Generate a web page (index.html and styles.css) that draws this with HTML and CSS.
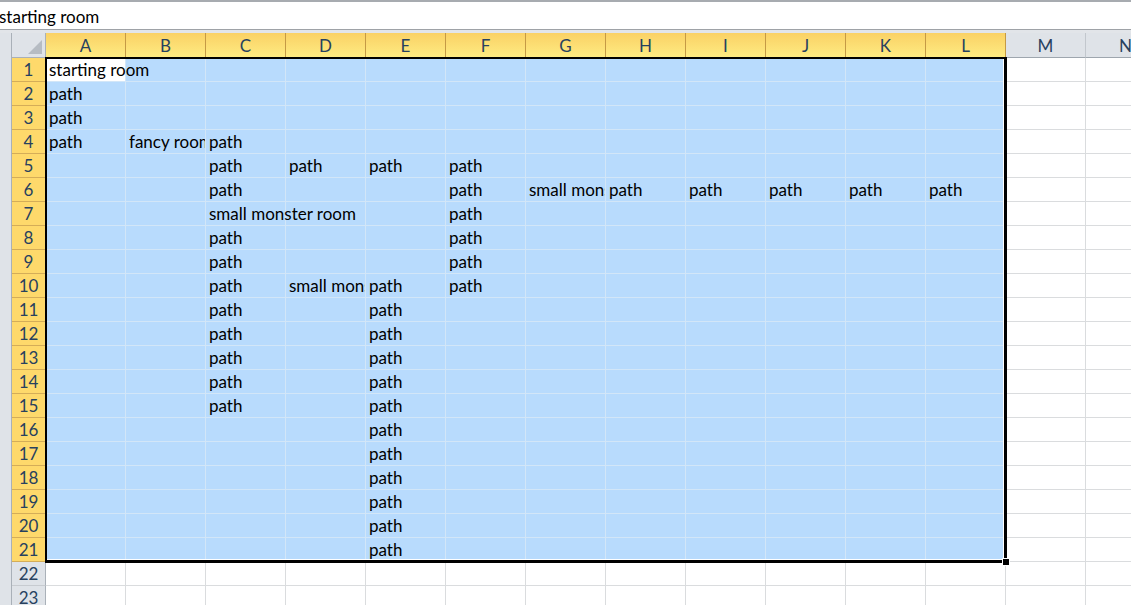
FILE: index.html
```html
<!DOCTYPE html>
<html>
<head>
<meta charset="utf-8">
<link rel="stylesheet" href="styles.css">
</head>
<body>
<div class="fx"><span class="fx-text">starting room</span></div>
<div class="sheet">
  <div class="gutter"></div>
  <div class="grid">
    <div class="corner"><span class="tri"></span></div>
    <div class="ch s">A</div><div class="ch s">B</div><div class="ch s">C</div><div class="ch s">D</div>
    <div class="ch s">E</div><div class="ch s">F</div><div class="ch s">G</div><div class="ch s">H</div>
    <div class="ch s">I</div><div class="ch s">J</div><div class="ch s">K</div><div class="ch s">L</div>
    <div class="ch">M</div><div class="ch">N</div>

    <div class="rh s">1</div><div class="rh s">2</div><div class="rh s">3</div><div class="rh s">4</div>
    <div class="rh s">5</div><div class="rh s">6</div><div class="rh s">7</div><div class="rh s">8</div>
    <div class="rh s">9</div><div class="rh s">10</div><div class="rh s">11</div><div class="rh s">12</div>
    <div class="rh s">13</div><div class="rh s">14</div><div class="rh s">15</div><div class="rh s">16</div>
    <div class="rh s">17</div><div class="rh s">18</div><div class="rh s">19</div><div class="rh s">20</div>
    <div class="rh s">21</div><div class="rh">22</div><div class="rh">23</div>

    <div class="body"></div>
    <div class="selection">
      <div class="sel-border"></div>
      <div class="handle"></div>
    </div>
    <div class="active"></div>

    <div class="t ca r1">starting room</div>
    <div class="t ca r2">path</div>
    <div class="t ca r3">path</div>
    <div class="t ca r4">path</div>
    <div class="t cb r4 clip">fancy room</div>
    <div class="t cc r4">path</div>

    <div class="t cc r5">path</div>
    <div class="t cd r5">path</div>
    <div class="t ce r5">path</div>
    <div class="t cf r5">path</div>

    <div class="t cc r6">path</div>
    <div class="t cf r6">path</div>
    <div class="t cg r6 clip">small monster room</div>
    <div class="t ch2 r6">path</div>
    <div class="t ci r6">path</div>
    <div class="t cj r6">path</div>
    <div class="t ck r6">path</div>
    <div class="t cl r6">path</div>

    <div class="t cc r7">small monster room</div>
    <div class="t cf r7">path</div>
    <div class="t cc r8">path</div>
    <div class="t cf r8">path</div>
    <div class="t cc r9">path</div>
    <div class="t cf r9">path</div>

    <div class="t cc r10">path</div>
    <div class="t cd r10 clip">small monster room</div>
    <div class="t ce r10">path</div>
    <div class="t cf r10">path</div>

    <div class="t cc r11">path</div><div class="t ce r11">path</div>
    <div class="t cc r12">path</div><div class="t ce r12">path</div>
    <div class="t cc r13">path</div><div class="t ce r13">path</div>
    <div class="t cc r14">path</div><div class="t ce r14">path</div>
    <div class="t cc r15">path</div><div class="t ce r15">path</div>
    <div class="t ce r16">path</div>
    <div class="t ce r17">path</div>
    <div class="t ce r18">path</div>
    <div class="t ce r19">path</div>
    <div class="t ce r20">path</div>
    <div class="t ce r21">path</div>
  </div>
</div>
</body>
</html>
```
FILE: styles.css
```css
* { box-sizing: border-box; }
html, body { margin: 0; padding: 0; }
body {
  width: 1131px;
  height: 605px;
  overflow: hidden;
  background: #fff;
  font-family: "Lato", "Open Sans", sans-serif;
  font-size: 17px;
  color: #000;
}

/* formula bar */
.fx {
  height: 30px;
  border-top: 2px solid #a7abb0;
  border-bottom: 1px solid #9ea2a7;
  background: #fff;
  padding-top: 2px;
  line-height: 25px;
  white-space: nowrap;
  overflow: hidden;
}
.fx-text { margin-left: -1px; }

/* sheet */
.sheet {
  display: flex;
  padding-top: 3px;
  background: #e2e5e9;
  height: 575px;
  overflow: hidden;
}
.gutter {
  flex: 0 0 12px;
  background: #dfe3e8;
  border-right: 1px solid #a9b0b8;
}
.grid {
  flex: 0 0 auto;
  display: grid;
  grid-template-columns: 34px repeat(14, 80px);
  grid-template-rows: 25px repeat(23, 24px);
  background: #fff;
}

/* headers */
.corner {
  position: relative;
  background: #dfe3e8;
  border-right: 1px solid #a9b0b8;
  border-bottom: 1px solid #a9b0b8;
}
.tri {
  position: absolute;
  right: 3px;
  bottom: 3px;
  width: 0;
  height: 0;
  border-left: 14px solid transparent;
  border-bottom: 14px solid #b6bcc3;
}
.ch, .rh {
  color: #27415f;
  text-align: center;
  background: #dfe3e8;
  font-size: 17px;
}
.ch {
  border-right: 1px solid #c2c7cd;
  border-bottom: 1px solid #9ea6ae;
  line-height: 25px;
}
.ch.s {
  background: linear-gradient(to bottom, #fad165, #feeb82);
  border-right-color: #c59a45;
  border-bottom-color: #b98a35;
}
.rh {
  border-right: 1px solid #aab1b9;
  border-bottom: 1px solid #c7cbd0;
  line-height: 24px;
}
.rh.s {
  background: #fed96b;
  border-right-color: #c2923a;
  border-bottom-color: #d4ad58;
}

/* cell area */
.body {
  grid-column: 2 / -1;
  grid-row: 2 / -1;
  background-image:
    linear-gradient(to right, transparent 79px, #dadcde 79px),
    linear-gradient(to bottom, transparent 23px, #dadcde 23px);
  background-size: 80px 100%, 100% 24px;
}
.selection {
  grid-column: 2 / 14;
  grid-row: 2 / 23;
  position: relative;
  background-color: #b8dbfd;
  background-image:
    linear-gradient(to right, transparent 79px, #d2e6f8 79px),
    linear-gradient(to bottom, transparent 23px, #d2e6f8 23px);
  background-size: 80px 100%, 100% 24px;
}
.sel-border {
  position: absolute;
  z-index: 1;
  left: -1px;
  top: -1px;
  right: -1px;
  bottom: -1px;
  border-style: solid;
  border-color: #000;
  border-width: 2px 3px 3px 2px;
  box-shadow: inset -1px -1px 0 #fff;
}
.handle {
  position: absolute;
  z-index: 2;
  right: -4px;
  bottom: -4px;
  width: 8px;
  height: 8px;
  background: #000;
  border: 1px solid #fff;
}
.active {
  position: relative;
  grid-column: 2;
  grid-row: 2;
  width: 79px;
  height: 23px;
  background: #fff;
}

/* cell text */
.t {
  position: relative;
  padding-left: 3px;
  white-space: nowrap;
  line-height: 24px;
}
.clip { overflow: hidden; width: 79px; }

.ca { grid-column: 2; }
.cb { grid-column: 3; }
.cc { grid-column: 4; }
.cd { grid-column: 5; }
.ce { grid-column: 6; }
.cf { grid-column: 7; }
.cg { grid-column: 8; }
.ch2 { grid-column: 9; }
.ci { grid-column: 10; }
.cj { grid-column: 11; }
.ck { grid-column: 12; }
.cl { grid-column: 13; }

.r1 { grid-row: 2; }
.r2 { grid-row: 3; }
.r3 { grid-row: 4; }
.r4 { grid-row: 5; }
.r5 { grid-row: 6; }
.r6 { grid-row: 7; }
.r7 { grid-row: 8; }
.r8 { grid-row: 9; }
.r9 { grid-row: 10; }
.r10 { grid-row: 11; }
.r11 { grid-row: 12; }
.r12 { grid-row: 13; }
.r13 { grid-row: 14; }
.r14 { grid-row: 15; }
.r15 { grid-row: 16; }
.r16 { grid-row: 17; }
.r17 { grid-row: 18; }
.r18 { grid-row: 19; }
.r19 { grid-row: 20; }
.r20 { grid-row: 21; }
.r21 { grid-row: 22; }
```
